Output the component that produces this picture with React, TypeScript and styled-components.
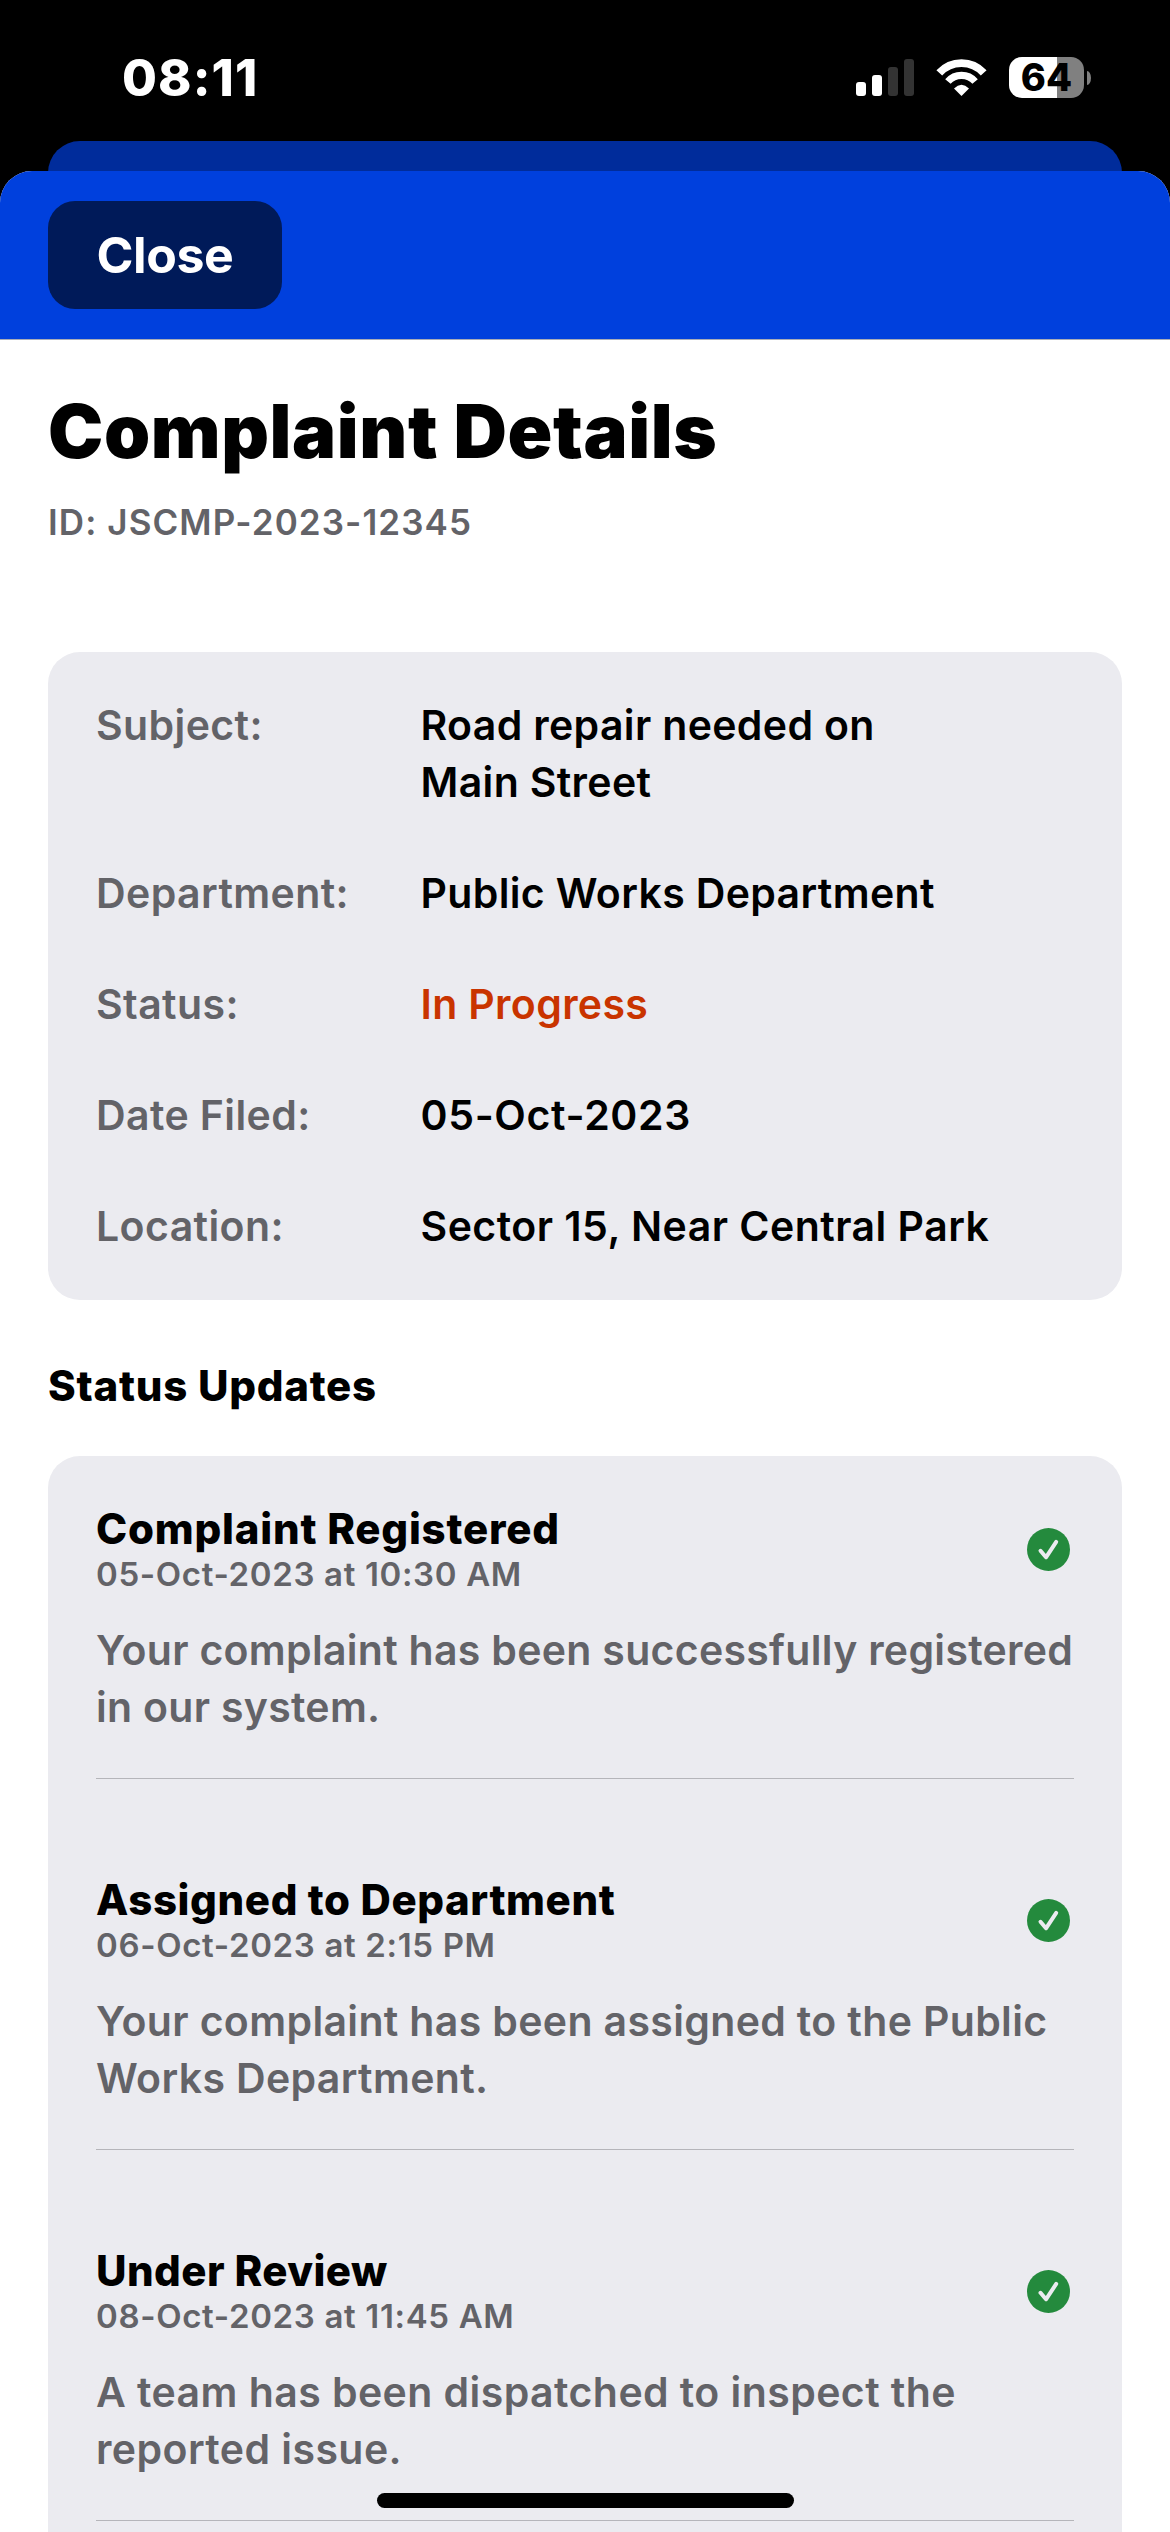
import React from 'react';
import styled, { createGlobalStyle } from 'styled-components';

const GlobalStyle = createGlobalStyle`
  html, body { margin: 0; padding: 0; background: #000; overflow: hidden; }
  *, *::before, *::after { box-sizing: border-box; }
  h1, h2, h3, p, dl, dt, dd, ul { margin: 0; padding: 0; }
`;

const Screen = styled.div`
  width: 1170px;
  height: 2532px;
  overflow: hidden;
  position: relative;
  display: flex;
  flex-direction: column;
  background: #000;
  color: #000;
  font-family: Inter, 'Liberation Sans', sans-serif;
  -webkit-font-smoothing: antialiased;
`;

const StatusBar = styled.header`
  flex: none;
  height: 141px;
  padding: 48px 79px 0 122px;
  display: flex;
  justify-content: space-between;
  align-items: flex-start;
  color: #fff;
`;

const Clock = styled.span`
  font-size: 50.5px;
  line-height: 60px;
  font-weight: 800;
  letter-spacing: 1.1px;
`;

const Indicators = styled.div`
  display: flex;
  align-items: center;
  height: 59px;
`;

const SignalIcon = styled.svg`
  width: 58px;
  height: 37px;
  margin-right: 22px;
`;

const WifiIcon = styled.svg`
  width: 51px;
  height: 38px;
  margin-right: 22px;
`;

const Battery = styled.div`
  width: 75px;
  height: 41px;
  border-radius: 13px;
  background: linear-gradient(to right, #fff 48px, #808080 48px);
  display: flex;
  align-items: center;
  justify-content: center;
  color: #000;
  font-size: 38px;
  line-height: 41px;
  font-weight: 800;
`;

const BatteryNub = styled.div`
  width: 4px;
  height: 14px;
  margin-left: 3px;
  border-radius: 0 4px 4px 0 / 0 7px 7px 0;
  background: #808080;
`;

const BackSheet = styled.div`
  flex: none;
  height: 62px;
  margin: 0 48px -32px;
  border-radius: 32px 32px 0 0;
  background: #002c9b;
`;

const Sheet = styled.main`
  flex: 1;
  min-height: 0;
  position: relative;
  border-radius: 32px 32px 0 0;
  overflow: hidden;
  background: #fff;
`;

const SheetBar = styled.div`
  height: 169px;
  padding: 30px 48px;
  background: #0040dd;
  border-bottom: 1px solid #a9adb8;
`;

const CloseButton = styled.button`
  width: 234px;
  height: 108px;
  border: 0;
  padding: 0;
  border-radius: 27px;
  background: #001a59;
  color: #fff;
  font: 650 50px/108px Inter, 'Liberation Sans', sans-serif;
  letter-spacing: -0.4px;
`;

const Content = styled.div`
  padding: 47px 48px 0;
`;

const Title = styled.h1`
  font-size: 74px;
  line-height: 88px;
  font-weight: 900;
  letter-spacing: 0.6px;
`;

const ComplaintId = styled.p`
  margin-top: 25px;
  font-size: 35px;
  line-height: 45px;
  font-weight: 560;
  letter-spacing: 1.08px;
  color: #636368;
`;

const DetailsCard = styled.dl`
  && {
    margin-top: 107px;
    padding: 45px 48px;
  }
  border-radius: 32px;
  background: #ebebf0;
  display: grid;
  row-gap: 54px;
`;

const DetailRow = styled.div`
  display: grid;
  grid-template-columns: 324.5px 1fr;
  font-size: 41px;
  line-height: 57px;
  font-weight: 560;
  letter-spacing: 0.4px;
`;

const Label = styled.dt`
  color: #636368;
`;

const Value = styled.dd<{ $color?: string; $tracking?: number }>`
  color: ${(p) => p.$color ?? '#000'};
  letter-spacing: ${(p) => p.$tracking ?? 0.35}px;
  white-space: pre-line;
`;

const SectionTitle = styled.h2`
  && {
    padding: 57px 0 42px;
  }
  font-size: 42px;
  line-height: 57px;
  font-weight: 800;
  letter-spacing: 0.75px;
`;

const UpdatesCard = styled.ul`
  && {
    padding: 48px 48px 0;
  }
  list-style: none;
  border-radius: 32px;
  background: #ebebf0;
`;

const Update = styled.li`
  padding-bottom: 96px;
`;

const Divider = styled.div`
  height: 1px;
  margin-top: 42px;
  background: #b5b5ba;
`;

const UpdateHead = styled.div`
  display: flex;
  align-items: center;
  justify-content: space-between;
  padding-right: 4px;
`;

const UpdateTitle = styled.h3<{ $tracking: number }>`
  font-size: 42px;
  line-height: 50px;
  font-weight: 800;
  letter-spacing: ${(p) => p.$tracking}px;
`;

const UpdateTime = styled.p`
  font-size: 33px;
  line-height: 40px;
  font-weight: 560;
  letter-spacing: 0.65px;
  color: #636368;
`;

const UpdateText = styled.p<{ $tracking: number }>`
  && {
    margin-top: 28px;
  }
  font-size: 41px;
  line-height: 57px;
  font-weight: 560;
  letter-spacing: ${(p) => p.$tracking}px;
  color: #636368;
  white-space: pre;
`;

const CheckIcon = styled.svg`
  flex: none;
  width: 43px;
  height: 43px;
`;

const HomeIndicator = styled.div`
  position: absolute;
  left: 377px;
  bottom: 24px;
  width: 417px;
  height: 15px;
  border-radius: 8px;
  background: #000;
`;

const details = [
  { label: 'Subject:', value: 'Road repair needed on\nMain Street' },
  { label: 'Department:', value: 'Public Works Department' },
  { label: 'Status:', value: 'In Progress', color: '#c93400' },
  { label: 'Date Filed:', value: '05-Oct-2023', tracking: 0.65 },
  { label: 'Location:', value: 'Sector 15, Near Central Park', tracking: 0.48 },
];

const updates = [
  {
    title: 'Complaint Registered',
    titleTracking: 0.78,
    time: '05-Oct-2023 at 10:30 AM',
    text: 'Your complaint has been successfully registered\nin our system.',
    tracking: 0.3,
  },
  {
    title: 'Assigned to Department',
    titleTracking: 0.6,
    time: '06-Oct-2023 at 2:15 PM',
    text: 'Your complaint has been assigned to the Public\nWorks Department.',
    tracking: 0.35,
  },
  {
    title: 'Under Review',
    titleTracking: 0.42,
    time: '08-Oct-2023 at 11:45 AM',
    text: 'A team has been dispatched to inspect the\nreported issue.',
    tracking: 0.43,
  },
];

function Signal() {
  return (
    <SignalIcon viewBox="0 0 58 37">
      <rect x="0" y="23" width="10" height="14" rx="3" fill="#fff" />
      <rect x="16" y="16" width="10" height="21" rx="3" fill="#fff" />
      <rect x="32" y="8" width="10" height="29" rx="3" fill="#333" />
      <rect x="48" y="0" width="10" height="37" rx="3" fill="#333" />
    </SignalIcon>
  );
}

function Wifi() {
  return (
    <WifiIcon viewBox="0 0 51 38" fill="none" stroke="#fff">
      <path d="M3.3 13.9A30.1 30.1 0 0 1 47.7 13.9" strokeWidth="7.8" />
      <path d="M11.9 22.5A18 18 0 0 1 39.1 22.5" strokeWidth="7.2" />
      <path d="M18 29.4Q25.500 22 33 29.4L25.500 37Z" fill="#fff" stroke="none" />
    </WifiIcon>
  );
}

function Check() {
  return (
    <CheckIcon viewBox="0 0 43 43">
      <circle cx="21.500" cy="21.500" r="21.500" fill="#248a3d" />
      <path
        d="M13.500 22.800L19 29.300L29.200 13.900"
        fill="none"
        stroke="#ebebf0"
        strokeWidth="4"
        strokeLinecap="round"
        strokeLinejoin="round"
      />
    </CheckIcon>
  );
}

export default function App() {
  return (
    <>
      <GlobalStyle />
      <Screen>
        <StatusBar>
          <Clock>08:11</Clock>
          <Indicators>
            <Signal />
            <Wifi />
            <Battery>64</Battery>
            <BatteryNub />
          </Indicators>
        </StatusBar>
        <BackSheet />
        <Sheet>
          <SheetBar>
            <CloseButton>Close</CloseButton>
          </SheetBar>
          <Content>
            <Title>Complaint Details</Title>
            <ComplaintId>ID: JSCMP-2023-12345</ComplaintId>
            <DetailsCard>
              {details.map((d) => (
                <DetailRow key={d.label}>
                  <Label>{d.label}</Label>
                  <Value $color={d.color} $tracking={d.tracking}>
                    {d.value}
                  </Value>
                </DetailRow>
              ))}
            </DetailsCard>
            <SectionTitle>Status Updates</SectionTitle>
            <UpdatesCard>
              {updates.map((u) => (
                <Update key={u.title}>
                  <UpdateHead>
                    <div>
                      <UpdateTitle $tracking={u.titleTracking}>{u.title}</UpdateTitle>
                      <UpdateTime>{u.time}</UpdateTime>
                    </div>
                    <Check />
                  </UpdateHead>
                  <UpdateText $tracking={u.tracking}>{u.text}</UpdateText>
                  <Divider />
                </Update>
              ))}
            </UpdatesCard>
          </Content>
        </Sheet>
        <HomeIndicator />
      </Screen>
    </>
  );
}
